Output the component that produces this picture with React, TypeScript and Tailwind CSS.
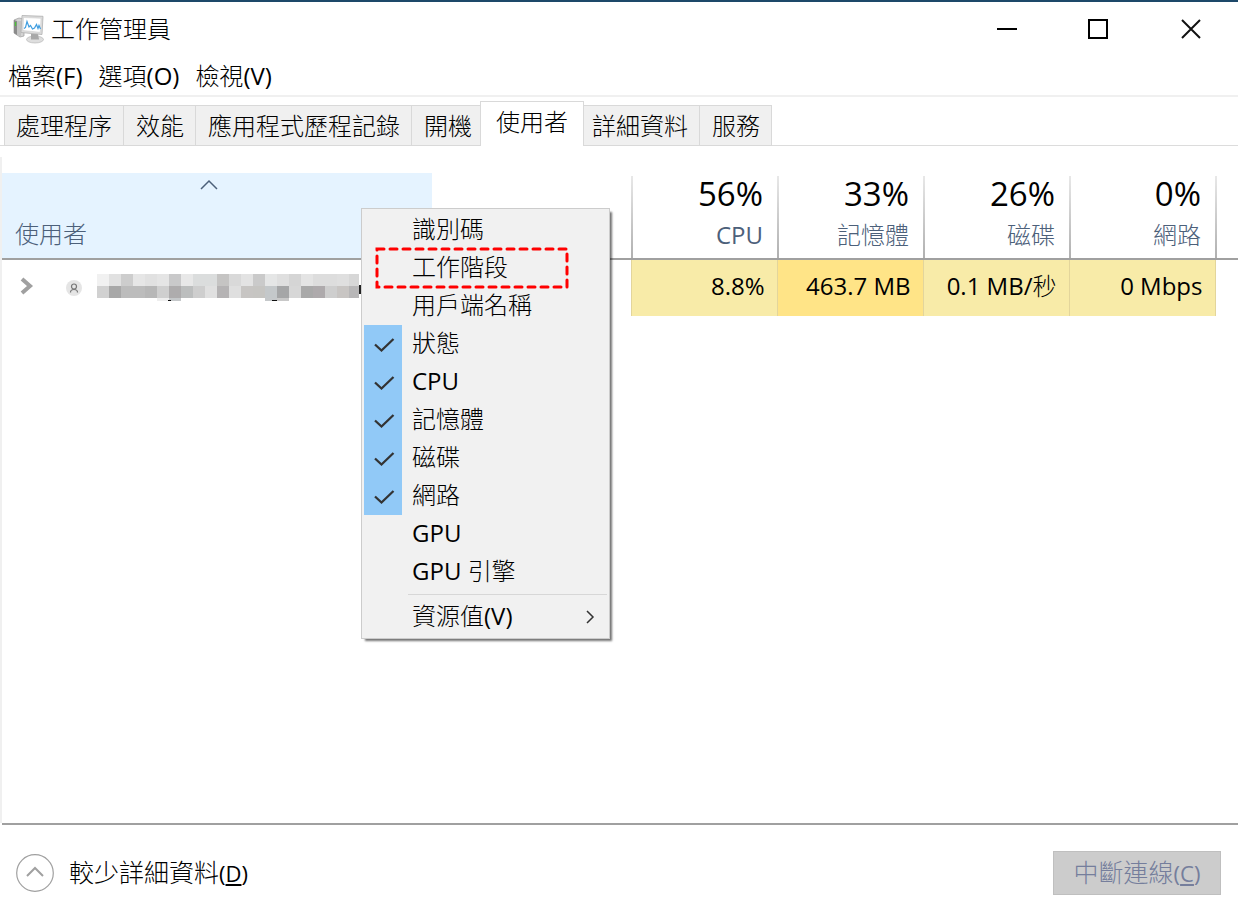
import React from "react";

const tabs = ["處理程序", "效能", "應用程式歷程記錄", "開機", "使用者", "詳細資料", "服務"];

const columns = [
  { label: "CPU", total: "56%", value: "8.8%", hot: false },
  { label: "記憶體", total: "33%", value: "463.7 MB", hot: true },
  { label: "磁碟", total: "26%", value: "0.1 MB/秒", hot: false },
  { label: "網路", total: "0%", value: "0 Mbps", hot: false },
];

const menuItems = [
  { label: "識別碼", checked: false },
  { label: "工作階段", checked: false },
  { label: "用戶端名稱", checked: false },
  { label: "狀態", checked: true },
  { label: "CPU", checked: true },
  { label: "記憶體", checked: true },
  { label: "磁碟", checked: true },
  { label: "網路", checked: true },
  { label: "GPU", checked: false },
  { label: "GPU 引擎", checked: false },
];

const mosaic = [
  ["#f1f1f1", "#e1e1e1", "#cdcdcd", "#e6e6e6", "#e1e1e1", "#e5e5e5", "#c9c9ca", "#e8e8e8", "#dbdddd", "#dbdddd", "#c5c4c3", "#d9d9d9", "#e3e3e3", "#cacaca", "#e5e6e6", "#dfdfdf", "#d5d5d5", "#e4e4e4", "#dddddd", "#dddddd", "#dfdfdf", "#d7d7d7"],
  ["#d1d1d1", "#a8a8a8", "#bcbcbc", "#bcbcbc", "#b7b7b7", "#cfcfcf", "#aeacad", "#bcbebe", "#cecece", "#e0e0e0", "#b5b3b4", "#dfdfdf", "#c7c5c3", "#c6c5c2", "#c4c8ca", "#a5a6a7", "#d7d7d7", "#a9a9a9", "#aeaaac", "#cecece", "#c8c5c3", "#b8b7b8"],
];

/* Chinese glyphs are set light; Latin runs keep the regular weight. */
function Mixed({ text }: { text: string }) {
  const runs = text.match(/[\x00-\x7f]+|[^\x00-\x7f]+/g) ?? [];
  return (
    <>
      {runs.map((run, i) =>
        run.charCodeAt(0) < 128 ? (
          <span key={i} className="font-normal">
            {run}
          </span>
        ) : (
          run
        )
      )}
    </>
  );
}

function AppIcon() {
  return (
    <svg width="32" height="30" viewBox="0 0 32 30" aria-hidden="true">
      <path d="M1 6l5-2 5 1v17l-4 1-6-4z" fill="#d4d4d4" stroke="#9a9a9a" strokeWidth=".7" />
      <path d="M1 6l3 1v14l-3-2z" fill="#8a8a8a" />
      <path d="M2.500 8v4" stroke="#4fc13c" strokeWidth="1.400" />
      <path d="M5 7v14M7 7v15" stroke="#a8a8a8" strokeWidth=".8" />
      <ellipse cx="22" cy="25.500" rx="8.500" ry="3.500" fill="#dedede" stroke="#b0b0b0" strokeWidth=".6" />
      <path d="M18 20h7l1 5.500h-8z" fill="#a8a8a8" />
      <path d="M9 1.500l21 .8-1 18.200-21-2z" fill="#dcdcdc" stroke="#b0b0b0" strokeWidth=".8" />
      <path d="M10.500 3.500l17.500.8-.8 14-17.200-1.800z" fill="#fff" stroke="#cacaca" strokeWidth=".5" />
      <path d="M11 14.500l1.500-1 1.500-6 2 5.500 1.500-1.500 2 3.500 2-1 2-3.500 1.500 4 1-3 1.500 3.500" fill="none" stroke="#3e9de0" strokeWidth="1.200" />
    </svg>
  );
}

function Check() {
  return (
    <svg width="22" height="18" viewBox="0 0 22 18" fill="none" stroke="#333" strokeWidth="2.300" aria-hidden="true">
      <path d="M2 8.500l6.500 6L20.500 3" />
    </svg>
  );
}

function ColumnMenu() {
  return (
    <div
      role="menu"
      className="absolute top-[51px] left-[361px] w-[249px] border border-[#ccc] bg-[#f1f1f1] p-[2px] shadow-[3px_3px_2px_-1px_rgba(0,0,0,0.55)]"
    >
      {menuItems.map((item) => (
        <button
          key={item.label}
          role="menuitemcheckbox"
          aria-checked={item.checked}
          className="flex h-[38px] w-full items-center text-left"
        >
          <span
            className={
              item.checked
                ? "flex h-full w-[38px] items-center justify-center bg-[#91c9f7] pt-[2px] pl-[2px]"
                : "h-full w-[38px]"
            }
          >
            {item.checked && <Check />}
          </span>
          <span className="pb-[2px] pl-[10px]">
            <Mixed text={item.label} />
          </span>
        </button>
      ))}
      <div role="separator" className="mt-[3px] mb-[3px] ml-11 h-px bg-[#d7d7d7]" />
      <button role="menuitem" className="flex h-[38px] w-full items-center pr-3 pl-[48px] text-left">
        <span className="flex-1 pb-[2px]">
          <Mixed text="資源值(V)" />
        </span>
        <svg width="9" height="14" viewBox="0 0 9 14" fill="none" stroke="#333" strokeWidth="1.500" aria-hidden="true">
          <path d="M1 1l6 6-6 6" />
        </svg>
      </button>
      <svg
        className="pointer-events-none absolute top-[37px] left-3 h-[44px] w-[196px]"
        viewBox="0 0 196 44"
        fill="none"
        aria-hidden="true"
      >
        <rect x="3" y="3" width="190" height="38" stroke="#ff0000" strokeWidth="3" strokeLinecap="round" strokeDasharray="7 6" />
      </svg>
    </div>
  );
}

function UserTable() {
  return (
    <table className="w-full table-fixed border-collapse">
      <colgroup>
        <col className="w-[430px]" />
        <col className="w-[199px]" />
        <col className="w-[146px]" />
        <col className="w-[146px]" />
        <col className="w-[146px]" />
        <col className="w-[146px]" />
        <col />
      </colgroup>
      <thead>
        <tr className="h-[86px] border-b-2 border-[#a0a0a0] text-[#4c607a]">
          <th className="bg-[#e5f3ff] p-0 align-top font-light">
            <button className="flex w-full flex-col pt-[6px] text-left">
              <svg className="mr-4 self-center" width="18" height="12" viewBox="0 0 18 12" fill="none" stroke="#4c607a" strokeWidth="1.500" aria-hidden="true">
                <path d="M1 10l8-8 8 8" />
              </svg>
              <span className="mt-[27px] pl-[13px]">使用者</span>
            </button>
          </th>
          <th aria-label="狀態" className="p-0" />
          {columns.map((c) => (
            <th
              key={c.label}
              className="bg-[linear-gradient(#e8e8e8,#b0b0b0)] bg-[length:2px_82px] bg-left-bottom bg-no-repeat p-0 pr-[14px] text-right align-top font-light"
            >
              <div className="text-[33px] leading-[41px] font-normal text-black">{c.total}</div>
              <div className="leading-[41px]">
                <Mixed text={c.label} />
              </div>
            </th>
          ))}
          <td className="bg-[linear-gradient(#e8e8e8,#b0b0b0)] bg-[length:2px_82px] bg-left-bottom bg-no-repeat" />
        </tr>
      </thead>
      <tbody>
        <tr className="h-[57px]">
          <td className="p-0 pb-1">
            <div className="flex items-center pl-[18px]">
              <button aria-label="展開">
                <svg width="15" height="18" viewBox="0 0 15 18" fill="none" stroke="#a0a0a0" strokeWidth="4" aria-hidden="true">
                  <path d="M2 2l8 7-8 7" />
                </svg>
              </button>
              <svg className="mt-[3px] ml-[31px]" width="16" height="16" viewBox="0 0 16 16" fill="none" aria-hidden="true">
                <circle cx="8" cy="8" r="8" fill="#e5e5e5" />
                <circle cx="8" cy="6.500" r="2.500" stroke="#777" strokeWidth="1.200" />
                <path d="M4.500 12.500c0-4 7-4 7 0" stroke="#777" strokeWidth="1.200" />
              </svg>
              <svg className="mt-[3px] ml-[15px]" width="264" height="28" viewBox="0 0 264 28" shapeRendering="crispEdges" aria-hidden="true">
                {mosaic.map((row, y) =>
                  row.map((fill, x) => (
                    <rect key={`${x}-${y}`} x={x * 12} y={y * 12} width={x === 21 ? 10 : 12} height="12" fill={fill} />
                  ))
                )}
                <rect x="60" y="24" width="12" height="3" fill="#eee" />
                <rect x="72" y="24" width="12" height="3" fill="#c5c8ca" />
                <rect x="168" y="24" width="12" height="3" fill="#c5c8ca" />
                <rect x="180" y="24" width="12" height="3" fill="#c8c8c8" />
                <rect x="71" y="26" width="3" height="1" fill="#111" />
                <rect x="175" y="26" width="5" height="1" fill="#111" />
                <rect x="262" y="11" width="2" height="9" fill="#222" />
              </svg>
            </div>
          </td>
          <td />
          {columns.map((c) => (
            <td
              key={c.label}
              className={
                c.hot
                  ? "border-l border-[#e5d08f] bg-[#ffe487] p-0 pr-3 pb-1 text-right"
                  : "border-x border-[#e3d59b] bg-[#f8eba8] p-0 pr-3 pb-1 text-right"
              }
            >
              <Mixed text={c.value} />
            </td>
          ))}
          <td />
        </tr>
      </tbody>
    </table>
  );
}

export default function App() {
  return (
    <div className="flex min-h-screen flex-col border-t-2 border-[#1d4869] bg-white font-['Open_Sans','Noto_Sans_CJK_TC',sans-serif] text-[24px] leading-[32px] font-light text-black">
      <header className="flex h-[54px] items-center pl-[13px]">
        <AppIcon />
        <h1 className="flex-1 pl-[6px]">工作管理員</h1>
        <div className="flex items-center gap-[70px] pr-[36px]">
          <button aria-label="最小化">
            <svg width="22" height="22" viewBox="0 0 22 22" stroke="#000" strokeWidth="2" aria-hidden="true">
              <path d="M1 11h20" />
            </svg>
          </button>
          <button aria-label="最大化">
            <svg width="22" height="22" viewBox="0 0 22 22" fill="none" stroke="#000" strokeWidth="2" aria-hidden="true">
              <rect x="1" y="2" width="18" height="18" />
            </svg>
          </button>
          <button aria-label="關閉">
            <svg width="22" height="22" viewBox="0 0 22 22" stroke="#111" strokeWidth="2" aria-hidden="true">
              <path d="M2 2l18 18M20 2L2 20" />
            </svg>
          </button>
        </div>
      </header>

      <nav className="flex h-[41px] items-center gap-4 border-b-2 border-[#f0f0f0] pl-2">
        {["檔案(F)", "選項(O)", "檢視(V)"].map((item) => (
          <button key={item}>
            <Mixed text={item} />
          </button>
        ))}
      </nav>

      <div role="tablist" className="flex h-[49px] items-end pl-1 shadow-[inset_0_-1px_0_#dcdcdc]">
        {tabs.map((tab, i) =>
          tab === "使用者" ? (
            <button
              key={tab}
              role="tab"
              aria-selected="true"
              className="z-10 -mr-1 -ml-1 h-[45px] border-x border-t border-[#d9d9d9] bg-white px-[15px] pb-1"
            >
              {tab}
            </button>
          ) : (
            <button
              key={tab}
              role="tab"
              aria-selected="false"
              className={
                i === 0
                  ? "h-[41px] border border-[#d9d9d9] bg-[#f0f0f0] px-[11px]"
                  : "h-[41px] border-y border-r border-[#d9d9d9] bg-[#f0f0f0] pr-[11px] pl-3"
              }
            >
              {tab}
            </button>
          )
        )}
      </div>

      <main className="relative mt-[11px] flex-1 border-l-2 border-[#f0f0f0] pt-4">
        <UserTable />
        <div className="absolute top-0 -left-[2px]">
          <ColumnMenu />
        </div>
      </main>

      <footer className="ml-[2px] flex h-[98px] items-center justify-between border-t-2 border-[#a0a0a0] pr-[17px] pl-[14px] text-[25px]">
        <button className="flex items-center gap-[15px]">
          <svg width="38" height="38" viewBox="0 0 38 38" fill="none" stroke="#a0a0a0" aria-hidden="true">
            <circle cx="19" cy="19" r="18.300" strokeWidth="1.200" />
            <path d="M11 22l8-8 8 8" strokeWidth="2" />
          </svg>
          <span className="pb-[2px]">
            較少詳細資料
            <span className="text-[22px] font-normal">
              (<u className="underline-offset-2">D</u>)
            </span>
          </span>
        </button>
        <button disabled className="h-[44px] w-[168px] border border-[#bfbfbf] bg-[#ccc] pb-[2px] text-[#757e9c]">
          中斷連線
          <span className="text-[22px] font-normal">
            (<u className="underline-offset-2">C</u>)
          </span>
        </button>
      </footer>
    </div>
  );
}
